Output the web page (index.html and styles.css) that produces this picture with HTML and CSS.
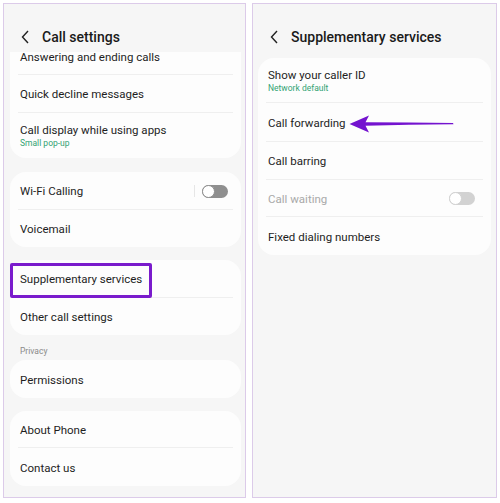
FILE: index.html
```html
<!DOCTYPE html>
<html lang="en">
<head>
<meta charset="utf-8">
<title>Call settings</title>
<link rel="stylesheet" href="styles.css">
</head>
<body>
<div class="screen">
  <section class="panel panel-left">
    <header class="bar">
      <svg class="back" width="9" height="14" viewBox="0 0 9 14"><polyline points="7,1 1.5,7 7,13" fill="none" stroke="#222" stroke-width="1.4"/></svg>
      <h1 class="title">Call settings</h1>
    </header>
    <div class="scroll">
      <div class="card card-first">
        <div class="row">Answering and ending calls</div>
        <div class="row">Quick decline messages</div>
        <div class="row row-tall"><span class="label">Call display while using apps</span><span class="sub">Small pop-up</span></div>
      </div>
      <div class="card card-gap">
        <div class="row"><span class="grow">Wi-Fi Calling</span><span class="sep"></span><span class="toggle"><span class="knob"></span></span></div>
        <div class="row">Voicemail</div>
      </div>
      <div class="card card-gap-s">
        <div class="row">Supplementary services<span class="highlight"></span></div>
        <div class="row">Other call settings</div>
      </div>
      <div class="section-label">Privacy</div>
      <div class="card">
        <div class="row">Permissions</div>
      </div>
      <div class="card card-gap-s">
        <div class="row">About Phone</div>
        <div class="row">Contact us</div>
      </div>
    </div>
  </section>
  <section class="panel panel-right">
    <header class="bar">
      <svg class="back" width="9" height="14" viewBox="0 0 9 14"><polyline points="7,1 1.5,7 7,13" fill="none" stroke="#222" stroke-width="1.4"/></svg>
      <h1 class="title">Supplementary services</h1>
    </header>
    <div class="scroll scroll-right">
      <div class="card card-top">
        <div class="row row-tall"><span class="label">Show your caller ID</span><span class="sub">Network default</span></div>
        <div class="row row-mid">Call forwarding
          <svg class="arrow" width="106" height="20" viewBox="0 0 106 20"><polygon points="0.5,10 20,1.5 16.5,8.3 60,8.6 104,9 104.5,10.3 60,10.8 16.5,11.7 20,18.5" fill="#7413cf"/></svg>
        </div>
        <div class="row">Call barring</div>
        <div class="row"><span class="grow muted">Call waiting</span><span class="toggle toggle-off"><span class="knob"></span></span></div>
        <div class="row">Fixed dialing numbers</div>
      </div>
    </div>
  </section>
</div>
</body>
</html>
```

FILE: styles.css
```css
html, body {
  margin: 0;
  background: #ffffff;
}
body {
  font-family: Roboto, "Noto Sans", sans-serif;
  color: #1e1e1e;
}
.screen {
  display: flex;
  gap: 6px;
  padding: 3px 0 0 3px;
  height: 503px;
  box-sizing: border-box;
}
.panel {
  height: 495px;
  box-sizing: border-box;
  border: 1px solid #dccbe9;
  background: #f6f6f6;
  display: flex;
  flex-direction: column;
  overflow: hidden;
}
.panel-left { width: 243px; }
.panel-right { width: 245px; }
.bar {
  height: 48px;
  flex: none;
  box-sizing: border-box;
  padding: 18px 0 0 17px;
  display: flex;
  align-items: center;
  gap: 12px;
  position: relative;
  z-index: 2;
  background: #f6f6f6;
}
.back { flex: none; }
.title {
  margin: 0;
  font-size: 14px;
  font-weight: 500;
  color: #1a1a1a;
  letter-spacing: 0;
}
.scroll {
  flex: 1;
  overflow: hidden;
  padding: 0 4px 0 6px;
}
.scroll-right { padding: 0 5px; }
.card {
  background: #fdfdfd;
  border-radius: 16px;
  padding: 0 8px;
}
.card-first { margin-top: -14.5px; }
.card-gap { margin-top: 14.5px; }
.card-gap-s { margin-top: 13px; }
.card-top { margin-top: 6px; }
.row {
  height: 37.5px;
  box-sizing: border-box;
  padding: 2px 2px 0;
  display: flex;
  align-items: center;
  font-size: 11.5px;
  border-bottom: 1px solid #efefef;
  position: relative;
}
.row:last-child { border-bottom: none; }
.row-tall {
  height: 45px;
  padding-top: 1px;
  flex-direction: column;
  align-items: flex-start;
  justify-content: center;
  gap: 1px;
}
.row-mid { height: 39px; }
.sub {
  font-size: 8.5px;
  color: #33a374;
}
.grow { flex: 1; }
.muted { color: #a9a9a9; }
.sep {
  width: 1px;
  height: 12px;
  background: #e6e6e6;
  margin-right: 7px;
}
.toggle {
  width: 26px;
  height: 13px;
  border-radius: 7px;
  background: #8f8f8f;
  margin-right: 3px;
  display: flex;
  align-items: center;
}
.knob {
  width: 13px;
  height: 13px;
  box-sizing: border-box;
  border-radius: 50%;
  background: #ffffff;
  border: 1.5px solid #8f8f8f;
}
.toggle-off { background: #d2d2d2; margin-right: 6px; }
.toggle-off .knob { border-color: #d2d2d2; }
.section-label {
  height: 25px;
  box-sizing: border-box;
  padding: 11px 0 0 10px;
  font-size: 8.5px;
  color: #8a8a8a;
}
.highlight {
  position: absolute;
  left: -8px;
  top: 3px;
  width: 142px;
  height: 35px;
  box-sizing: border-box;
  border: 3px solid #7a1bcc;
  border-radius: 2px;
}
.arrow {
  position: absolute;
  left: 83px;
  top: 11px;
}
```
